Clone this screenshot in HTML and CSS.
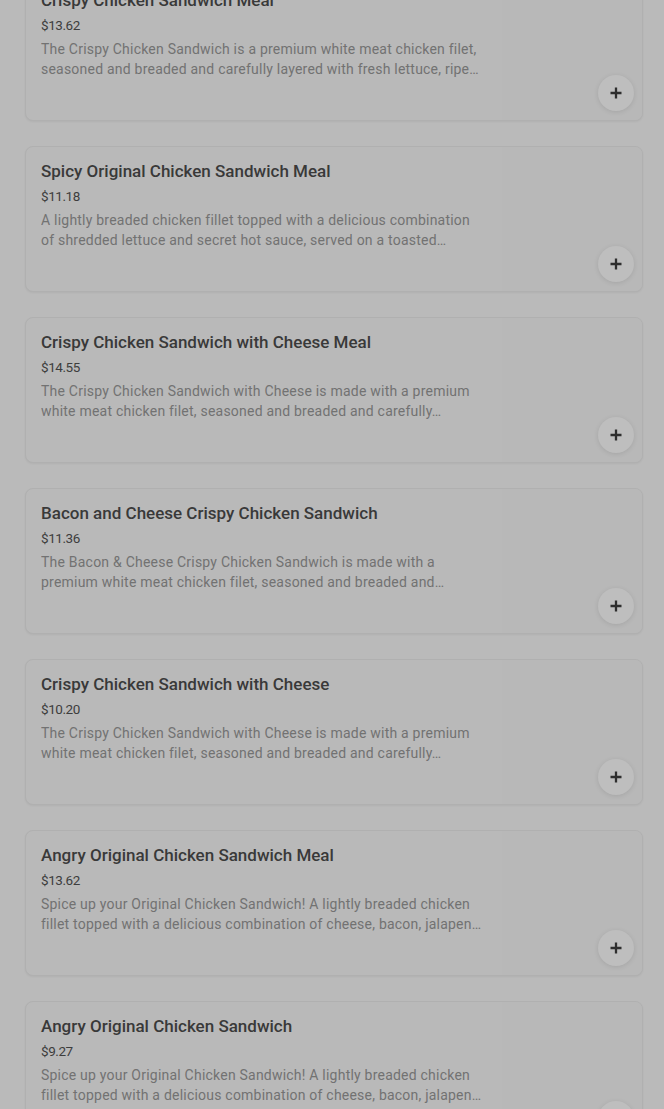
FILE: index.html
```html
<!DOCTYPE html>
<html>
<head>
<meta charset="utf-8">
<link rel="stylesheet" href="styles.css">
</head>
<body>
<main class="menu">
  <article class="card">
    <div class="info">
      <h3 class="title">Crispy Chicken Sandwich Meal</h3>
      <div class="price">$13.62</div>
      <p class="desc">The Crispy Chicken Sandwich is a premium white meat chicken filet, seasoned and breaded and carefully layered with fresh lettuce, ripe…</p>
    </div>
    <div class="thumb"><button class="add" aria-label="Add"><svg viewBox="0 0 12 12" width="12" height="12"><path d="M6 0.5v11M0.5 6h11" stroke="#2e2e2e" stroke-width="2.3"/></svg></button></div>
  </article>
  <article class="card">
    <div class="info">
      <h3 class="title">Spicy Original Chicken Sandwich Meal</h3>
      <div class="price">$11.18</div>
      <p class="desc">A lightly breaded chicken fillet topped with a delicious combination of shredded lettuce and secret hot sauce, served on a toasted…</p>
    </div>
    <div class="thumb"><button class="add" aria-label="Add"><svg viewBox="0 0 12 12" width="12" height="12"><path d="M6 0.5v11M0.5 6h11" stroke="#2e2e2e" stroke-width="2.3"/></svg></button></div>
  </article>
  <article class="card">
    <div class="info">
      <h3 class="title">Crispy Chicken Sandwich with Cheese Meal</h3>
      <div class="price">$14.55</div>
      <p class="desc">The Crispy Chicken Sandwich with Cheese is made with a premium white meat chicken filet, seasoned and breaded and carefully…</p>
    </div>
    <div class="thumb"><button class="add" aria-label="Add"><svg viewBox="0 0 12 12" width="12" height="12"><path d="M6 0.5v11M0.5 6h11" stroke="#2e2e2e" stroke-width="2.3"/></svg></button></div>
  </article>
  <article class="card">
    <div class="info">
      <h3 class="title">Bacon and Cheese Crispy Chicken Sandwich</h3>
      <div class="price">$11.36</div>
      <p class="desc">The Bacon &amp; Cheese Crispy Chicken Sandwich is made with a premium white meat chicken filet, seasoned and breaded and…</p>
    </div>
    <div class="thumb"><button class="add" aria-label="Add"><svg viewBox="0 0 12 12" width="12" height="12"><path d="M6 0.5v11M0.5 6h11" stroke="#2e2e2e" stroke-width="2.3"/></svg></button></div>
  </article>
  <article class="card">
    <div class="info">
      <h3 class="title">Crispy Chicken Sandwich with Cheese</h3>
      <div class="price">$10.20</div>
      <p class="desc">The Crispy Chicken Sandwich with Cheese is made with a premium white meat chicken filet, seasoned and breaded and carefully…</p>
    </div>
    <div class="thumb"><button class="add" aria-label="Add"><svg viewBox="0 0 12 12" width="12" height="12"><path d="M6 0.5v11M0.5 6h11" stroke="#2e2e2e" stroke-width="2.3"/></svg></button></div>
  </article>
  <article class="card">
    <div class="info">
      <h3 class="title">Angry Original Chicken Sandwich Meal</h3>
      <div class="price">$13.62</div>
      <p class="desc">Spice up your Original Chicken Sandwich! A lightly breaded chicken fillet topped with a delicious combination of cheese, bacon, jalapen…</p>
    </div>
    <div class="thumb"><button class="add" aria-label="Add"><svg viewBox="0 0 12 12" width="12" height="12"><path d="M6 0.5v11M0.5 6h11" stroke="#2e2e2e" stroke-width="2.3"/></svg></button></div>
  </article>
  <article class="card">
    <div class="info">
      <h3 class="title">Angry Original Chicken Sandwich</h3>
      <div class="price">$9.27</div>
      <p class="desc">Spice up your Original Chicken Sandwich! A lightly breaded chicken fillet topped with a delicious combination of cheese, bacon, jalapen…</p>
    </div>
    <div class="thumb"><button class="add" aria-label="Add"><svg viewBox="0 0 12 12" width="12" height="12"><path d="M6 0.5v11M0.5 6h11" stroke="#2e2e2e" stroke-width="2.3"/></svg></button></div>
  </article>
</main>
</body>
</html>
```
FILE: styles.css
```css
html, body {
  margin: 0;
  padding: 0;
  background: #bababa;
  overflow: hidden;
  height: 1109px;
}
body {
  font-family: Roboto, "Liberation Sans", Arial, sans-serif;
}
.menu {
  display: flex;
  flex-direction: column;
  gap: 25px;
  padding: 0 21px 0 25px;
  margin-top: -25px;
}
.card {
  display: flex;
  height: 146px;
  box-sizing: border-box;
  background: #b9b9b9;
  border: 1px solid #b0b0b0;
  border-radius: 8px;
  box-shadow: 0 1px 2px rgba(0,0,0,0.05);
  overflow: hidden;
}
.info {
  width: 476px;
  flex: none;
  box-sizing: border-box;
  padding: 14px 16px 0 15px;
}
.title {
  margin: 0;
  font-size: 17px;
  line-height: 20px;
  font-weight: 500;
  color: #393939;
}
.price {
  margin-top: 5px;
  font-size: 13.5px;
  line-height: 20px;
  letter-spacing: -0.45px;
  color: #3d3d3d;
}
.desc {
  margin: 4px 0 0;
  font-size: 14px;
  line-height: 20px;
  letter-spacing: 0.22px;
  color: #727272;
  display: -webkit-box;
  -webkit-line-clamp: 2;
  -webkit-box-orient: vertical;
  overflow: hidden;
}
.thumb {
  flex: 1;
  background: #b8b8b8;
  display: flex;
  align-items: flex-end;
  justify-content: flex-end;
  padding: 0 8px 9px 0;
  box-sizing: border-box;
}
.add {
  width: 36px;
  height: 36px;
  border-radius: 50%;
  border: none;
  background: #bebebe;
  box-shadow: 0 1px 5px rgba(0,0,0,0.1);
  display: flex;
  align-items: center;
  justify-content: center;
  padding: 0;
}
```
